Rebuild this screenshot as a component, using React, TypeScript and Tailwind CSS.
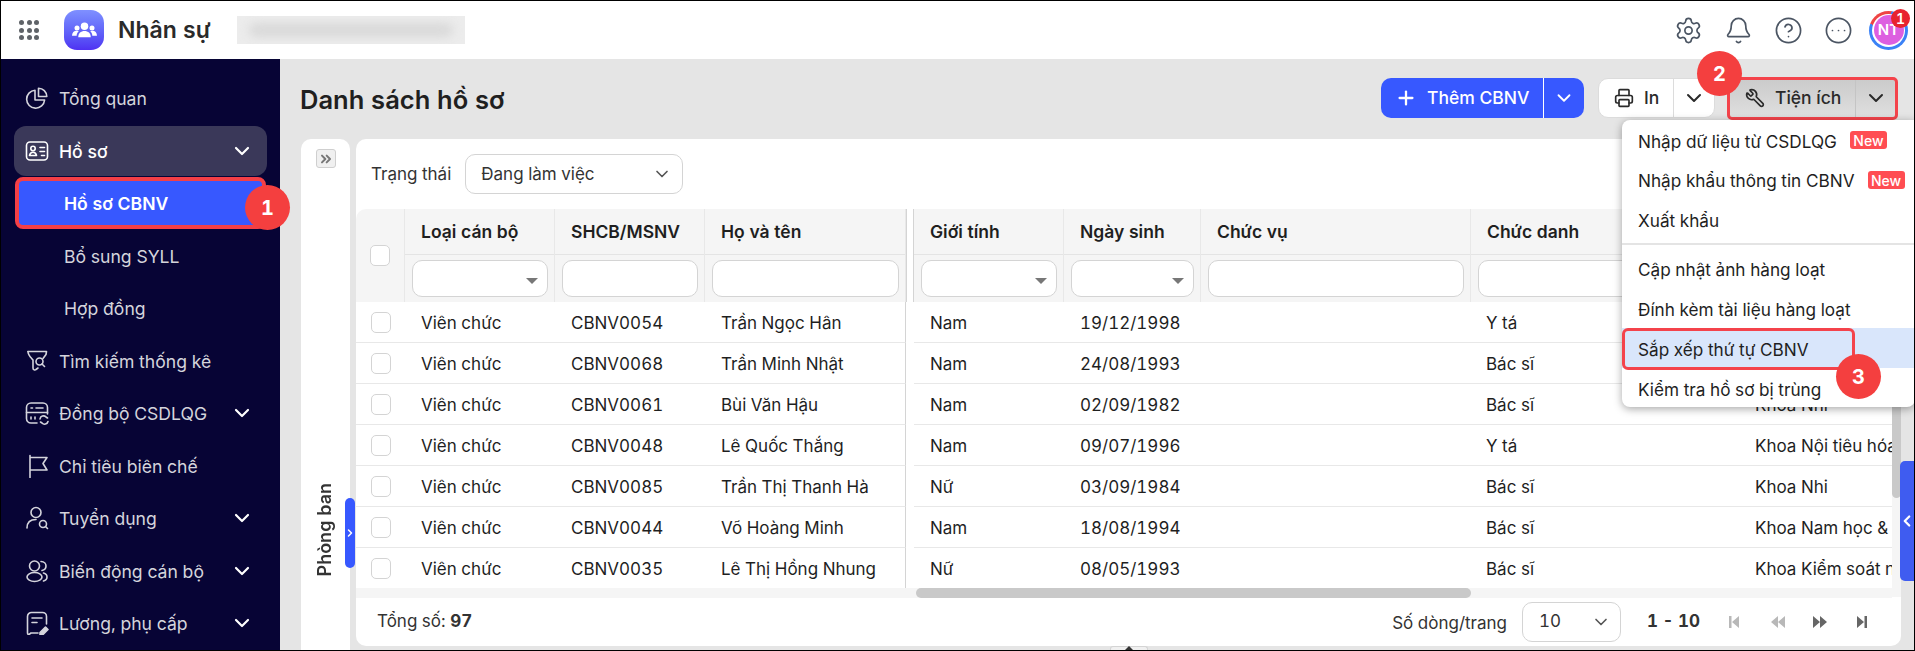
import { ChevronDown, ChevronLeft, ChevronRight, ChevronsRight, CircleEllipsis, CircleHelp, Bell, Plus, Printer, Settings, Wrench } from "lucide-react";
import type { ReactNode } from "react";

type SvgProps = { children: ReactNode };

const NavIcon = ({ children }: SvgProps) => (
  <svg viewBox="0 0 24 24" fill="none" stroke="currentColor" strokeWidth="1.6" strokeLinecap="round" strokeLinejoin="round" className="w-[24px] h-[24px] shrink-0">
    {children}
  </svg>
);

const icons: Record<string, ReactNode> = {
  overview: (
    <>
      <path d="M10 4.2a9 9 0 1 0 9.6 9.8h-9.6z" />
      <path d="M13.5 2.2a8.5 8.5 0 0 1 8.3 8.3h-8.3z" />
    </>
  ),
  profile: (
    <>
      <rect x="1.5" y="3" width="21" height="18" rx="3.5" />
      <circle cx="8" cy="9.5" r="2.2" />
      <path d="M4.5 16.5c.4-2.2 1.8-3.3 3.5-3.3s3.1 1.100 3.500 3.300z" />
      <path d="M15 8.500h4.500M15 12.500h4.500M16.500 16.500h3" />
    </>
  ),
  search: (
    <>
      <path d="M3 2.500h18.500l-.5 3-3 4" />
      <path d="M3 2.500c0 4 3.500 6.500 5 8.500v8c0 2 2 2.500 3 1.500l2-1.500" />
      <circle cx="14.500" cy="12.500" r="3.500" />
      <path d="m17 15 2.500 2.500" />
    </>
  ),
  sync: (
    <>
      <path d="M12 22H6a4.500 4.500 0 0 1-4.500-4.500v-11A4.500 4.500 0 0 1 6 2h12a4.500 4.500 0 0 1 4.500 4.500V13" />
      <path d="M1.500 11.500h21M6 7h1.500M11 7h7M6 16v2M10 16v2" />
      <path d="M15 18a3.500 3.500 0 0 1 6-2l1.500 1M23 20.500a3.500 3.500 0 0 1-6 1.500l-1.500-1" />
    </>
  ),
  flag: <path d="M5 1.500v22M5 3.500h17l-4 6 4 6.500H5" />,
  recruit: (
    <>
      <circle cx="11" cy="6.500" r="5" />
      <path d="M2 22c0-5 3-8.500 9-8.500" />
      <circle cx="18" cy="18" r="3.500" />
      <path d="m20.500 20.500 2 2" />
    </>
  ),
  change: (
    <>
      <circle cx="9.500" cy="7" r="5" />
      <ellipse cx="9.500" cy="18" rx="7.500" ry="4.500" />
      <path d="M16 2.500c3.500 0 5 2.500 5 4.500s-1.500 4-4 4.500M18.500 14c2 .5 3.500 2 3.500 4s-1.500 3.500-3.500 4" />
    </>
  ),
  salary: (
    <>
      <path d="M13 22H6l-2 1.500c-1 0-1.500-.5-1.500-1.500V5.500A4 4 0 0 1 6.500 1.500h11a4 4 0 0 1 4 4V13" />
      <path d="M7 7h10M7 11.500h5" />
      <path d="m15 21.500 5.500-5.500 2.500 2.500-5.500 5.500H15z" fill="currentColor" />
    </>
  ),
};

type NavItem = { label: string; icon: string; chevron?: boolean };

const NavRow = ({ label, icon, chevron }: NavItem) => (
  <div className="h-[52.5px] flex items-center px-[13px]">
    <div className="h-[50px] w-[253px] flex items-center pl-[11px] pr-[13px] text-[#d4d4dc]">
      <NavIcon>{icons[icon]}</NavIcon>
      <span className="ml-[10px] pt-[2px] flex-1 text-[17.6px]">{label}</span>
      {chevron && <ChevronDown className="w-[24px] h-[24px] text-white" strokeWidth={2.2} />}
    </div>
  </div>
);

const StepBadge = ({ n, className }: { n: number; className: string }) => (
  <div className={`absolute z-30 w-[45px] h-[45px] rounded-full bg-[#f43f3f] text-white font-bold text-[20px] flex items-center justify-center ${className}`}>
    {n}
  </div>
);

const Sidebar = () => (
  <aside className="w-[279px] shrink-0 bg-[#070435] pt-[13px]">
    <NavRow label="Tổng quan" icon="overview" />
    <div className="h-[52.5px] flex items-center px-[13px]">
      <div className="h-[50px] w-[253px] flex items-center pl-[11px] pr-[13px] text-white bg-[#3a3859] rounded-[12px]">
        <NavIcon>{icons.profile}</NavIcon>
        <span className="ml-[10px] pt-[2px] flex-1 text-[17.6px] font-medium">Hồ sơ</span>
        <ChevronDown className="w-[24px] h-[24px]" strokeWidth={2.2} />
      </div>
    </div>
    <div className="h-[52.5px] flex items-center px-[14px] relative">
      <div className="h-[52px] w-[253px] flex items-center pl-[45px] pt-[2px] text-white bg-[#3758ff] border-[4px] border-[#f43f46] rounded-[8px] font-semibold text-[17.6px]">
        Hồ sơ CBNV
      </div>
      <StepBadge n={1} className="left-[244px] top-[8px]" />
    </div>
    <div className="h-[52.5px] flex items-center pl-[63px] pt-[2px] text-[#d4d4dc] text-[17.6px]">Bổ sung SYLL</div>
    <div className="h-[52.5px] flex items-center pl-[63px] pt-[2px] text-[#d4d4dc] text-[17.6px]">Hợp đồng</div>
    <NavRow label="Tìm kiếm thống kê" icon="search" />
    <NavRow label="Đồng bộ CSDLQG" icon="sync" chevron />
    <NavRow label="Chỉ tiêu biên chế" icon="flag" />
    <NavRow label="Tuyển dụng" icon="recruit" chevron />
    <NavRow label="Biến động cán bộ" icon="change" chevron />
    <NavRow label="Lương, phụ cấp" icon="salary" chevron />
  </aside>
);

const TopBar = () => (
  <header className="h-[58px] shrink-0 bg-white flex items-center relative">
    <div className="ml-[18px] grid grid-cols-3 gap-[2.500px] w-[20px]">
      {Array.from({ length: 9 }).map((_, i) => (
        <span key={i} className="w-[5px] h-[5px] rounded-full bg-[#5f6368]" />
      ))}
    </div>
    <div className="ml-[25px] w-[40px] h-[40px] rounded-[13px] bg-linear-to-b from-[#7f90ff] to-[#4f30f2] flex items-center justify-center">
      <svg viewBox="0 0 24 24" fill="white" className="w-[25px] h-[25px]">
        <circle cx="12" cy="8" r="3.600" />
        <circle cx="4.800" cy="9.500" r="2.400" />
        <circle cx="19.200" cy="9.500" r="2.400" />
        <path d="M6 18.500c0-4 2.500-6 6-6s6 2 6 6z" />
        <path d="M0 17c0-3 1.800-4.800 4.500-4.800 1 0 1.600.2 2 .5C5 14 4.500 15.500 4.500 17zM24 17c0-3-1.800-4.800-4.500-4.800-1 0-1.600.2-2 .5 1.500 1.300 2 2.800 2 4.300z" />
      </svg>
    </div>
    <span className="ml-[14px] text-[23px] font-semibold text-[#2a2a2a]">Nhân sự</span>
    <div className="ml-[26px] w-[228px] h-[28px] bg-[#ececec] overflow-hidden flex items-center">
      <div className="w-full h-[14px] mx-[12px] rounded-full bg-[#d9d9d9] blur-[5px]" />
    </div>
    <div className="ml-auto flex items-center text-[#4b5563]">
      <Settings className="w-[29px] h-[29px] mr-[21px]" strokeWidth={1.4} />
      <Bell className="w-[29px] h-[29px] mr-[21px]" strokeWidth={1.4} />
      <CircleHelp className="w-[29px] h-[29px] mr-[21px]" strokeWidth={1.4} />
      <CircleEllipsis className="w-[29px] h-[29px] mr-[16px]" strokeWidth={1.4} />
      <div className="relative w-[39px] h-[39px] mr-[6px] rounded-full bg-[conic-gradient(from_290deg,#ef4444_0_22%,#3b82f6_22%_100%)] p-[3px]">
        <div className="w-full h-full rounded-full bg-white p-[1.500px]">
          <div className="w-full h-full rounded-full bg-[#dd5fe0] text-white text-[15px] font-semibold flex items-center justify-center">NT</div>
        </div>
        <div className="absolute -top-[2px] -right-[2px] w-[19px] h-[19px] rounded-full bg-[#e8232f] text-white text-[14px] font-semibold flex items-center justify-center">1</div>
      </div>
    </div>
  </header>
);

const ActionBar = () => (
  <div className="h-[80px] shrink-0 flex items-center pl-[20px] pr-[16px] relative">
    <h1 className="text-[25.5px] font-semibold text-[#1f1f1f] mt-[2px]">Danh sách hồ sơ</h1>
    <div className="ml-auto flex items-center -mt-[2px]">
      <div className="w-[203px] h-[40px] rounded-[10px] bg-[#3758ff] text-white flex items-center">
        <Plus className="w-[22px] h-[22px] ml-[14px]" strokeWidth={2.500} />
        <span className="ml-[10px] w-[116px] text-[17.5px] font-medium">Thêm CBNV</span>
        <span className="h-full w-px bg-white" />
        <ChevronDown className="w-[22px] h-[22px] ml-[9px]" strokeWidth={2} />
      </div>
      <div className="ml-[14px] w-[117px] h-[40px] rounded-[10px] bg-white border border-[#dcdcdc] flex items-center text-[#2a2a2a]">
        <Printer className="w-[20px] h-[20px] ml-[15px]" strokeWidth={2} />
        <span className="ml-[10px] w-[29px] text-[17.5px] font-medium">In</span>
        <span className="h-full w-px bg-[#dcdcdc]" />
        <ChevronDown className="w-[24px] h-[24px] ml-[8px]" strokeWidth={2} />
      </div>
      <div className="ml-[12px] w-[171px] h-[43px] rounded-[5px] border-[3.500px] border-[#f4434b] bg-linear-to-b from-[#cbcbcb] to-[#dfdfdf] flex items-center text-[#2a2a2a]">
        <Wrench className="w-[20px] h-[20px] ml-[15px] -scale-x-100" strokeWidth={2} />
        <span className="ml-[10px] w-[80px] text-[17.5px] font-medium">Tiện ích</span>
        <span className="h-full w-px bg-[#c4c4c4]" />
        <ChevronDown className="w-[24px] h-[24px] ml-[8px]" strokeWidth={2} />
      </div>
    </div>
    <StepBadge n={2} className="left-[1417px] top-[-8px]" />
  </div>
);

const DropMenu = () => (
  <div className="absolute z-20 left-[1342px] top-[61px] w-[293px] h-[287px] bg-white rounded-l-[8px] rounded-br-[8px] shadow-[0_2px_8px_rgba(0,0,0,0.35)] text-[17.2px] text-[#1f1f1f]">
    <div className="h-[40px] flex items-center pl-[16px] pt-[3px]">
      Nhập dữ liệu từ CSDLQG
      <span className="ml-[13px] -mt-[3px] h-[18px] w-[37px] rounded-[3px] bg-[#ff4d52] text-white text-[14px] font-medium flex items-center justify-center">New</span>
    </div>
    <div className="h-[40px] flex items-center pl-[16px] pt-[2px]">
      Nhập khẩu thông tin CBNV
      <span className="ml-[13px] -mt-[2px] h-[18px] w-[37px] rounded-[3px] bg-[#ff4d52] text-white text-[14px] font-medium flex items-center justify-center">New</span>
    </div>
    <div className="h-[39px] flex items-center pl-[16px] pt-[3px]">Xuất khẩu</div>
    <div className="h-[10px] flex items-center"><div className="w-full h-[2px] bg-[#e4e4e4]" /></div>
    <div className="h-[40px] flex items-center pl-[16px] pt-[2px]">Cập nhật ảnh hàng loạt</div>
    <div className="h-[39px] flex items-center pl-[16px] pt-[2px]">Đính kèm tài liệu hàng loạt</div>
    <div className="h-[40px] flex items-center pl-[16px] pt-[3px] bg-[#d9e6fb] relative">
      Sắp xếp thứ tự CBNV
      <div className="absolute left-0 top-0 w-[233px] h-[42px] rounded-[6px] border-[3.500px] border-[#f4434b]" />
    </div>
    <div className="h-[39px] flex items-center pl-[16px] pt-[4px]">Kiểm tra hồ sơ bị trùng</div>
    <StepBadge n={3} className="left-[214px] top-[234px]" />
  </div>
);

const widths = ["w-[49px]", "w-[150px]", "w-[150px]", "w-[201px]", "w-[8px]", "w-[150px]", "w-[137px]", "w-[270px]", "w-[269px]", "w-[152px]"];

const columns = ["", "Loại cán bộ", "SHCB/MSNV", "Họ và tên", "", "Giới tính", "Ngày sinh", "Chức vụ", "Chức danh", "Phòng ban"];
const filterKinds = ["", "select", "text", "text", "", "select", "select", "text", "text", "text"];

const rows = [
  ["Viên chức", "CBNV0054", "Trần Ngọc Hân", "Nam", "19/12/1998", "Y tá", ""],
  ["Viên chức", "CBNV0068", "Trần Minh Nhật", "Nam", "24/08/1993", "Bác sĩ", ""],
  ["Viên chức", "CBNV0061", "Bùi Văn Hậu", "Nam", "02/09/1982", "Bác sĩ", "Khoa Nhi"],
  ["Viên chức", "CBNV0048", "Lê Quốc Thắng", "Nam", "09/07/1996", "Y tá", "Khoa Nội tiêu hóa"],
  ["Viên chức", "CBNV0085", "Trần Thị Thanh Hà", "Nữ", "03/09/1984", "Bác sĩ", "Khoa Nhi"],
  ["Viên chức", "CBNV0044", "Võ Hoàng Minh", "Nam", "18/08/1994", "Bác sĩ", "Khoa Nam học & Y học"],
  ["Viên chức", "CBNV0035", "Lê Thị Hồng Nhung", "Nữ", "08/05/1993", "Bác sĩ", "Khoa Kiểm soát nhiễm khuẩn"],
];

const Checkbox = () => <span className="block w-[20px] h-[21px] rounded-[5px] border border-[#d4d4d4] bg-white" />;

const TableHead = () => (
  <div className="h-[93px] flex bg-[#f5f5f5] rounded-t-[10px] overflow-hidden">
    {columns.map((c, i) => {
      if (i === 0) {
        return (
          <div key={i} className={`${widths[i]} shrink-0 flex items-center pl-[14px] border-r border-[#e8e8e8]`}>
            <Checkbox />
          </div>
        );
      }
      if (i === 4) {
        return <div key={i} className={`${widths[i]} shrink-0 bg-white border-x border-[#d4d4d4]`} />;
      }
      return (
        <div key={i} className={`${widths[i]} shrink-0 border-r border-[#e8e8e8]`}>
          <div className="h-[46px] flex items-center pl-[16px] pt-[2px] font-semibold text-[17.5px] text-[#1f1f1f] border-b border-[#e4e4e4] whitespace-nowrap">{c}</div>
          <div className="h-[47px] pl-[7px] pr-[6px] pt-[5px]">
            <div className="h-[37px] rounded-[10px] border border-[#d4d4d4] bg-white flex items-center justify-end pr-[9px]">
              {filterKinds[i] === "select" && <span className="mt-[4px] w-0 h-0 border-x-[6px] border-x-transparent border-t-[6px] border-t-[#777]" />}
            </div>
          </div>
        </div>
      );
    })}
  </div>
);

const TableRow = ({ cells }: { cells: string[] }) => (
  <div className="h-[41px] flex items-center text-[17px] text-[#1f1f1f] whitespace-nowrap">
    <div className={`${widths[0]} shrink-0 h-full flex items-center pl-[15px] border-b border-[#e8e8e8]`}>
      <Checkbox />
    </div>
    <div className={`${widths[1]} shrink-0 h-full flex items-center pl-[16px] pt-[3px] border-b border-[#e8e8e8]`}>{cells[0]}</div>
    <div className={`${widths[2]} shrink-0 h-full flex items-center pl-[16px] pt-[3px] border-b border-[#e8e8e8]`}>{cells[1]}</div>
    <div className={`${widths[3]} shrink-0 h-full flex items-center pl-[16px] pt-[3px] border-b border-r border-b-[#e8e8e8] border-r-[#d4d4d4]`}>{cells[2]}</div>
    <div className={`${widths[4]} shrink-0 h-full`} />
    <div className={`${widths[5]} shrink-0 h-full flex items-center pl-[16px] pt-[3px] border-b border-[#e8e8e8]`}>{cells[3]}</div>
    <div className={`${widths[6]} shrink-0 h-full flex items-center pl-[16px] pt-[3px] border-b border-[#e8e8e8]`}>{cells[4]}</div>
    <div className={`${widths[7]} shrink-0 h-full border-b border-[#e8e8e8]`} />
    <div className={`${widths[8]} shrink-0 h-full flex items-center pl-[15px] pt-[3px] border-b border-[#e8e8e8]`}>{cells[5]}</div>
    <div className={`${widths[9]} shrink-0 h-full flex items-center pl-[15px] pt-[3px] border-b border-[#e8e8e8] overflow-hidden`}>{cells[6]}</div>
  </div>
);

const PageIcon = ({ d, className }: { d: string; className: string }) => (
  <svg viewBox="0 0 16 16" className={`w-[16px] h-[16px] ${className}`} fill="currentColor">
    <path d={d} />
  </svg>
);

const Footer = () => (
  <div className="flex-1 flex items-center pl-[21px] text-[#333] relative">
    <span className="text-[17px] -mt-[1px]">Tổng số: <b className="font-bold">97</b></span>
    <span className="ml-auto text-[17px] mt-[4px]">Số dòng/trang</span>
    <div className="ml-[15px] w-[99px] h-[40px] rounded-[10px] border border-[#d4d4d4] flex items-center pl-[16px] pr-[9px] justify-between text-[17px]">
      10
      <ChevronDown className="w-[20px] h-[20px] text-[#555]" strokeWidth={2} />
    </div>
    <span className="ml-[26px] font-bold text-[17px] w-[54px] whitespace-nowrap -mt-[1px]">1 - 10</span>
    <PageIcon d="M3 2h2.500v12H3zM13 2v12L6 8z" className="ml-[25px] text-[#b8b8b8]" />
    <PageIcon d="M8 2v12L1 8zM15 2v12L8 8z" className="ml-[28px] text-[#b8b8b8]" />
    <PageIcon d="M1 2v12l7-6zM8 2v12l7-6z" className="ml-[26px] text-[#666]" />
    <PageIcon d="M3 2v12l7-6zM10.500 2H13v12h-2.500z" className="ml-[26px] mr-[31px] text-[#666]" />
  </div>
);

const TablePanel = () => (
  <section className="w-[1545px] h-[507px] bg-white rounded-[10px] flex flex-col relative">
    <div className="h-[70px] shrink-0 flex items-center pl-[15px] text-[17px] text-[#333]">
      <span className="pt-[2px]">Trạng thái</span>
      <div className="ml-[14px] w-[218px] h-[40px] rounded-[10px] border border-[#d4d4d4] flex items-center justify-between pl-[15px] pr-[10px]">
        <span className="pt-[2px]">Đang làm việc</span>
        <ChevronDown className="w-[20px] h-[20px] text-[#555]" strokeWidth={2} />
      </div>
    </div>
    <div className="w-[1536px] overflow-hidden">
      <TableHead />
      {rows.map((r) => (
        <TableRow key={r[1]} cells={r} />
      ))}
    </div>
    <div className="w-[1536px] h-[10px] bg-[#f5f5f5] shrink-0 pl-[560px] -mt-[1px]">
      <div className="w-[555px] h-full rounded-[5px] bg-[#c9c9c9]" />
    </div>
    <div className="absolute right-0 top-[70px] w-[9px] h-[388px] bg-[#f5f5f5]">
      <div className="absolute bottom-[99px] h-[200px] w-full rounded-[5px] bg-[#c9c9c9]" />
    </div>
    <Footer />
  </section>
);

const Content = () => (
  <main className="flex-1 bg-[#e5e5e5] relative">
    <ActionBar />
    <div className="flex gap-[6px] pl-[21px] items-start">
      <div className="w-[49px] h-[512px] bg-white rounded-t-[10px] flex flex-col items-center relative">
        <div className="mt-[10px] w-[20px] h-[19px] rounded-[3px] border border-[#cfcfcf] bg-[#f0f0f0] flex items-center justify-center text-[#777]">
          <ChevronsRight className="w-[16px] h-[16px]" strokeWidth={3} />
        </div>
        <span className="absolute top-[344px] left-[10px] font-semibold text-[18px] text-[#333] [writing-mode:vertical-rl] rotate-180 whitespace-nowrap">Phòng ban</span>
        <div className="absolute left-[44px] top-[359px] z-10 w-[10px] h-[70px] rounded-[5px] bg-[#3758ff] flex items-center justify-center text-white">
          <ChevronRight className="w-[12px] h-[12px] shrink-0" strokeWidth={3} />
        </div>
      </div>
      <TablePanel />
    </div>
    <div className="absolute right-0 top-[402px] w-[14px] h-[120px] rounded-l-[5px] bg-[#3f5cf0] flex items-center justify-center text-white">
      <ChevronLeft className="w-[18px] h-[18px] shrink-0" strokeWidth={3} />
    </div>
    <div className="absolute bottom-0 left-[830px] w-[38px] h-[4px] bg-[#f0f0f0] rounded-t-[3px] border border-b-0 border-[#d4d4d4] flex justify-center">
      <span className="mt-[-1px] w-0 h-0 border-x-[4px] border-x-transparent border-b-[4px] border-b-[#333]" />
    </div>
    <DropMenu />
  </main>
);

export default function App() {
  return (
    <div className="w-[1915px] h-[651px] border border-black flex flex-col overflow-hidden font-['Inter',sans-serif] tabular-nums">
      <TopBar />
      <div className="flex flex-1 min-h-0">
        <Sidebar />
        <Content />
      </div>
    </div>
  );
}
